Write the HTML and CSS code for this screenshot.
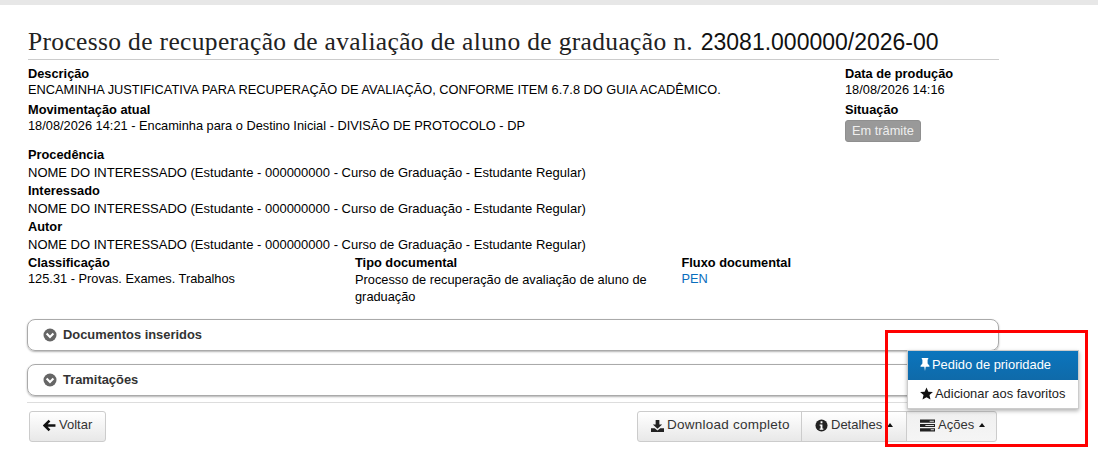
FILE: index.html
```html
<!DOCTYPE html>
<html lang="pt-BR">
<head>
<meta charset="utf-8">
<title>Processo</title>
<link rel="stylesheet" href="styles.css">
</head>
<body>
<div class="topbar"></div>
<main class="page">
  <h1 class="title">Processo de recuperação de avaliação de aluno de graduação n. <span class="num">23081.000000/2026-00</span></h1>
  <section class="head-grid">
    <div class="head-main">
      <div class="field"><strong>Descrição</strong><p>ENCAMINHA JUSTIFICATIVA PARA RECUPERAÇÃO DE AVALIAÇÃO, CONFORME ITEM 6.7.8 DO GUIA ACADÊMICO.</p></div>
      <div class="field"><strong>Movimentação atual</strong><p>18/08/2026 14:21 - Encaminha para o Destino Inicial - DIVISÃO DE PROTOCOLO - DP</p></div>
    </div>
    <div class="head-side">
      <div class="field"><strong>Data de produção</strong><p>18/08/2026 14:16</p></div>
      <div class="field"><strong>Situação</strong><p class="badge-row"><span class="badge">Em trâmite</span></p></div>
    </div>
  </section>
  <section class="people">
    <strong>Procedência</strong><p>NOME DO INTERESSADO (Estudante - 000000000 - Curso de Graduação - Estudante Regular)</p>
    <strong>Interessado</strong><p>NOME DO INTERESSADO (Estudante - 000000000 - Curso de Graduação - Estudante Regular)</p>
    <strong>Autor</strong><p>NOME DO INTERESSADO (Estudante - 000000000 - Curso de Graduação - Estudante Regular)</p>
  </section>
  <section class="cols">
    <div><strong>Classificação</strong><p>125.31 - Provas. Exames. Trabalhos</p></div>
    <div><strong>Tipo documental</strong><p>Processo de recuperação de avaliação de aluno de graduação</p></div>
    <div><strong>Fluxo documental</strong><p><a href="#">PEN</a></p></div>
  </section>
  <div class="panel panel-first">
    <svg class="chev" viewBox="0 0 14 14"><circle cx="7" cy="7" r="6.5" fill="#666"/><path d="M3.6 5.6 7 9l3.4-3.4" fill="none" stroke="#fff" stroke-width="2.1"/></svg>
    <span>Documentos inseridos</span>
  </div>
  <div class="panel panel-last">
    <svg class="chev" viewBox="0 0 14 14"><circle cx="7" cy="7" r="6.5" fill="#666"/><path d="M3.6 5.6 7 9l3.4-3.4" fill="none" stroke="#fff" stroke-width="2.1"/></svg>
    <span>Tramitações</span>
  </div>
  <footer class="actions">
    <button class="btn back"><svg class="ico" viewBox="0 0 12 12"><path d="M6 1.5 1.5 6 6 10.500M2 6h9.500" fill="none" stroke="#111" stroke-width="2.300"/></svg> Voltar</button>
    <div class="btn-group">
      <button class="btn btn-dl"><svg class="ico" viewBox="0 0 14 14"><path d="M5 1h4v5h3L7 10.500 2 6h3zM0 10h4l3 2.500 3-2.500h4v4H0z" fill="#222"/></svg> Download completo</button>
      <button class="btn btn-det"><svg class="ico" viewBox="0 0 14 14"><circle cx="7" cy="7" r="6.500" fill="#222"/><path d="M6 2.500h2v2H6zM5 6h3v4.200h1v1.300H5v-1.300h1V7.300H5z" fill="#fff"/></svg> Detalhes <i class="caret"></i></button>
      <button class="btn btn-act"><svg class="ico wide" viewBox="0 0 14 11"><path d="M0 0h14v3H0zM0 4h14v3H0zM0 8h14v3H0z" fill="#222"/><path d="M9 1.500h4M5 5.500h8M10 9.500h3" stroke="#ddd" stroke-width="1"/></svg> Ações <i class="caret"></i></button>
    </div>
  </footer>
</main>
<ul class="menu">
  <li class="active"><svg class="ico pin" viewBox="0 0 10 14"><path d="M1.500 0h7v1.200L7.800 2v4l2 2.300V9.500H5.800L5 14l-.8-4.500H.2V8.300L2.200 6V2l-.7-.8z" fill="#fff"/></svg> Pedido de prioridade</li>
  <li><svg class="ico" viewBox="0 0 14 14"><path d="m7 .5 2 4.500 4.900.5-3.700 3.200 1.100 4.800L7 11l-4.300 2.500 1.100-4.800L.1 5.500 5 5z" fill="#111"/></svg> Adicionar aos favoritos</li>
</ul>
<div class="highlight"></div>
</body>
</html>
```
FILE: styles.css
```css
* { box-sizing: border-box; }
html, body { margin: 0; }
body { width: 1098px; height: 464px; overflow: hidden; background: #fff; color: #000; font: 12.8px/18px "Liberation Sans", Arial, sans-serif; position: relative; }
p { margin: 0; }
strong { display: block; font-weight: 700; }
.topbar { height: 5px; background: #e7e7e7; }
.page { width: 971px; margin-left: 28px; padding-top: 18px; }
.title { margin: 0; height: 37px; border-bottom: 1px solid #ccc; font: 400 25.5px/38px "Liberation Serif", serif; letter-spacing: .34px; color: #222; white-space: nowrap; }
.num { font: 400 23px/38px "Liberation Sans", sans-serif; letter-spacing: 0; color: #111; margin-left: 1px; }
.head-grid { display: flex; padding-top: 6px; }
.head-main { width: 817px; }
.head-side { flex: 1; }
.field { line-height: 16px; margin-bottom: 4px; }
.head-side .field:last-child { margin-bottom: 0; }
.badge-row { display: flex; padding-top: 2px; }
.badge { height: 22px; padding: 0 6px; border-radius: 3px; background: #999; border: 1px solid #8f8f8f; color: #eee; line-height: 20px; }
.people { margin-top: 4px; font-size: 13px; }
.people strong { font-size: 12.8px; }
.cols { display: grid; grid-template-columns: 327px 326.5px 1fr; line-height: 16px; margin-top: 1px; }
.cols > div:nth-child(2) p { width: 300px; line-height: 17px; }
.cols a { color: #0a6ebd; text-decoration: none; }
.panel { height: 32px; width: 972px; margin: 0 0 13px -1px; padding: 0 0 0 16px; display: flex; align-items: center; gap: 6px; border: 1px solid #aaa; border-radius: 8px; box-shadow: 0 1px 2px rgba(0,0,0,.3); font-weight: 700; font-size: 12.9px; color: #333; }
.panel-first { margin-top: 14px; }
.panel-last { margin-bottom: 6px; }
.chev { width: 14px; height: 14px; margin: -1px 0 0 -1px; }
.actions { display: flex; justify-content: space-between; width: 972px; margin-left: -1px; padding: 8px 2px 0; border-top: 1px solid #ddd; }
.btn { height: 31px; padding: 0 13px 3px; font: 13px/26px "Liberation Sans", Arial, sans-serif; color: #333; background: linear-gradient(#fff, #e8e8e8); border: 1px solid #ccc; border-radius: 3px; display: inline-flex; align-items: center; gap: 3px; white-space: nowrap; }
.back { width: 77px; }
.btn-group { display: flex; }
.btn-group .btn { border-radius: 0; margin-left: -1px; }
.btn-det { width: 106px; }
.btn-group .btn-act { width: 91px; border-radius: 0 3px 3px 0; background: linear-gradient(#f0f0f0, #f5f5f5); }
.btn-group .btn-dl { border-radius: 3px 0 0 3px; width: 165px; margin-left: 0; font-size: 13.5px; letter-spacing: .25px; }
.ico { width: 13px; height: 13px; flex: none; }
.ico.wide { width: 15px; }
.caret { width: 0; height: 0; margin-left: 2px; border: 3.5px solid transparent; border-top: 0; border-bottom: 4px solid #111; }
.menu { position: absolute; left: 907px; top: 350px; width: 172px; height: 59px; margin: 0; padding: 0; list-style: none; background: #fff; border: 1px solid #ccc; box-shadow: 0 2px 4px rgba(0,0,0,.3); }
.menu li { height: 28px; padding: 0 0 1px 12px; display: flex; align-items: center; gap: 2px; font-size: 12.9px; color: #222; }
.menu li.active { height: 29px; padding-bottom: 2px; background: linear-gradient(#0b75bd, #0f6aa9); color: #fff; }
.ico.pin { width: 10px; }
.highlight { position: absolute; left: 885px; top: 330px; width: 203px; height: 117px; border: 3px solid #f00; }
```
